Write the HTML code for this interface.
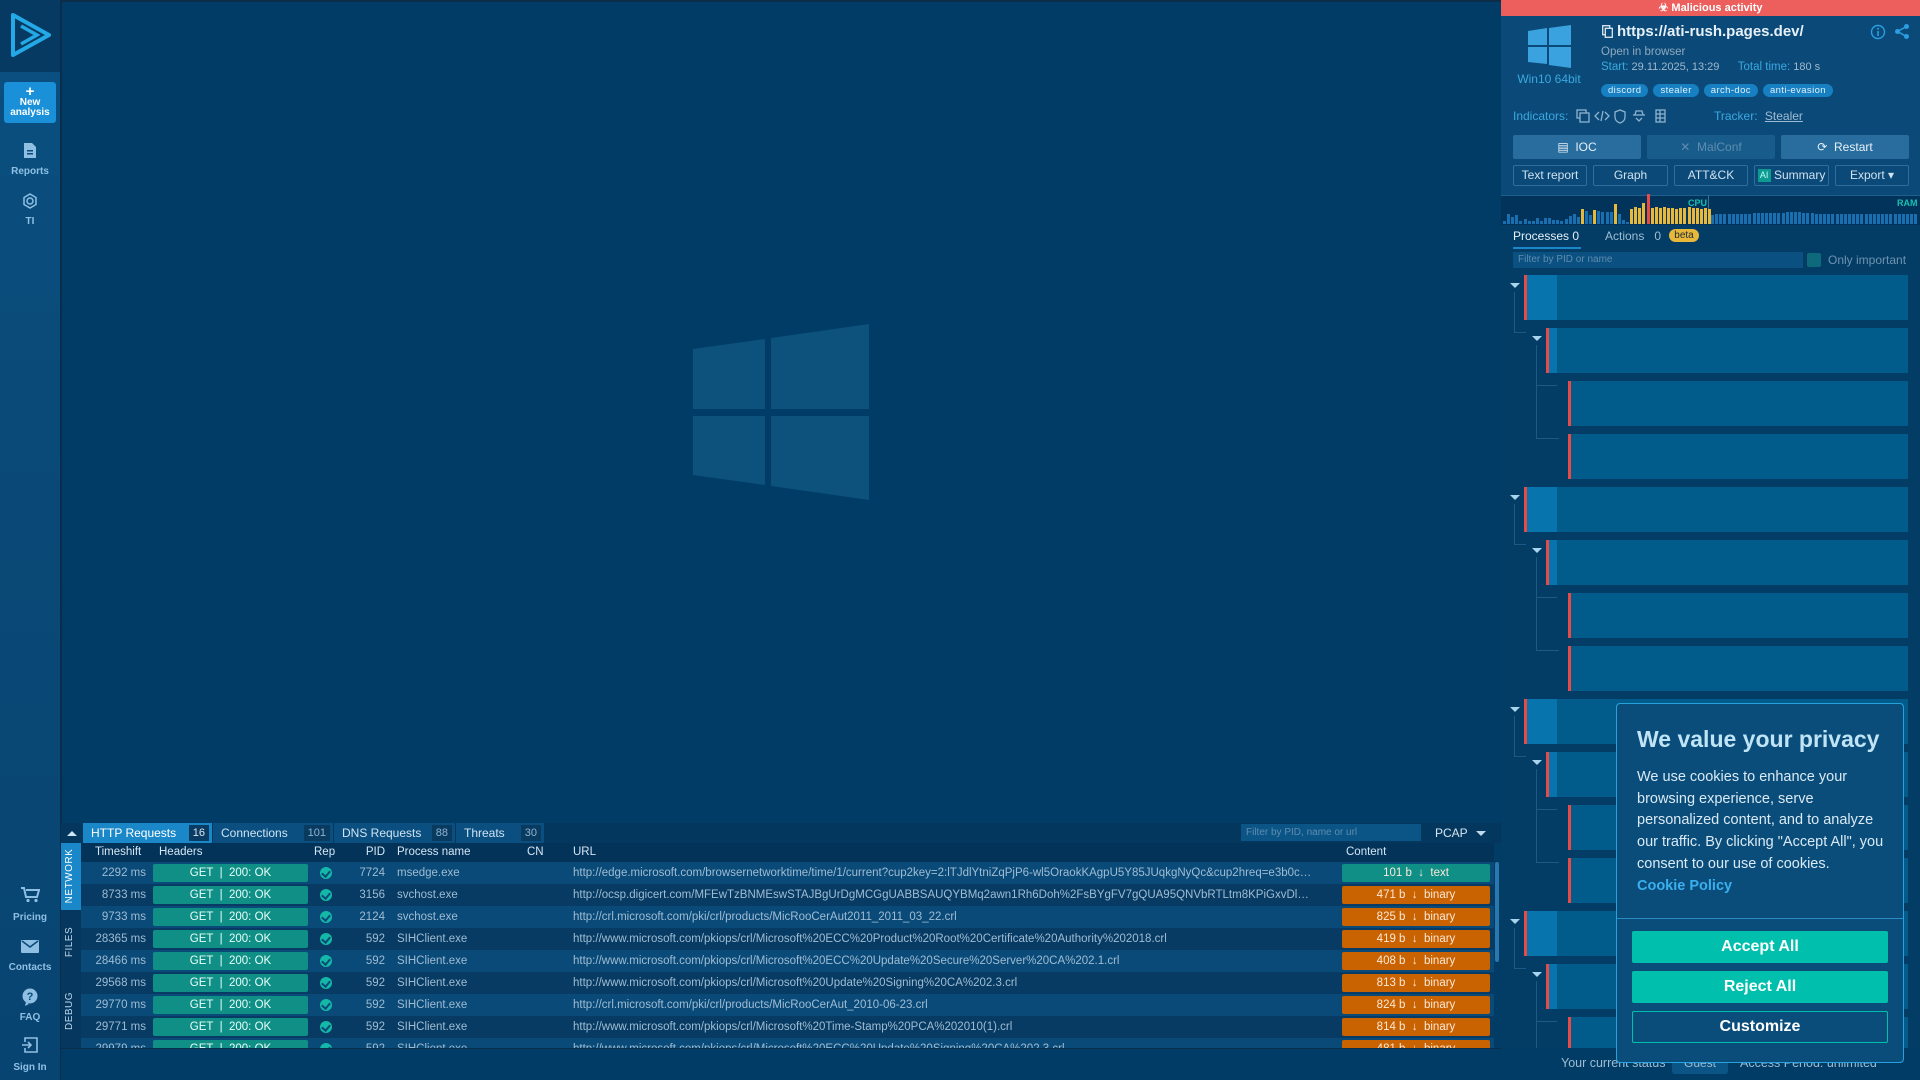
<!DOCTYPE html>
<html><head><meta charset="utf-8">
<style>
*{margin:0;padding:0;box-sizing:border-box}
body{width:1920px;height:1080px;overflow:hidden;background:#003c66;font-family:"Liberation Sans",sans-serif;position:relative;color:#cfe3f2}
.a{position:absolute}
.side{left:0;top:0;width:61px;height:1080px;background:linear-gradient(#073a62 0,#073a62 72px,#0a4f80 72px,#0a4a78 400px,#084472 1080px);border-right:1px solid #0b2d4a}
.sl{position:absolute;left:0;width:60px;text-align:center;font-size:10px;font-weight:bold;color:#8fc0e4}
.main{left:61px;top:0;width:1440px;height:1049px;background:#003c66;border-top:2px solid #0b2d4a;border-left:1px solid #0b2d4a}
.right{left:1501px;top:0;width:419px;height:1049px;background:#0b4a78}
.tab{position:absolute;top:823px;height:20px;font-size:12px;color:#cfe3f2;padding-left:8px;line-height:20px;background:#0a4f80;font-family:"Liberation Sans Narrow","Liberation Sans",sans-serif}
.tab b{position:absolute;right:3px;top:2px;height:16px;padding:0 4px;background:#093a60;font-weight:normal;line-height:16px;font-size:11px;color:#8fb3cf}
.row{position:absolute;left:81px;width:1413px;height:22px;font-size:11.5px;line-height:22px;color:#9fbcd3;font-family:"Liberation Sans Narrow","Liberation Sans",sans-serif;white-space:nowrap;overflow:hidden}
.row span{position:absolute}
.row .u{left:492px;width:740px;overflow:hidden;text-overflow:ellipsis}
.hd{background:#0f8f85;color:#e8fffb;text-align:center;height:18px;top:2px;line-height:18px;border-radius:2px}
.ct{height:18px;top:2px;line-height:18px;border-radius:2px;text-align:center;color:#fde9d8}
.ok{left:239px;top:5px;width:12px;height:12px;border-radius:6px;background:#14b8a6}
.ok:after{content:"";position:absolute;left:3px;top:2px;width:4px;height:6px;border:solid #0a4a78;border-width:0 2px 2px 0;transform:rotate(40deg)}
.pr{position:absolute;height:45px;background:#025c8b}
.pr i{position:absolute;left:0;top:0;width:3px;height:45px;background:#e84b45}
.pr u{position:absolute;left:3px;top:0;height:45px;background:#0874ad}
.tri{position:absolute;width:0;height:0;border-left:5px solid transparent;border-right:5px solid transparent;border-top:5px solid #a9d4ee}
.btn{position:absolute;height:24px;font-size:12px;text-align:center;line-height:24px;border-radius:2px}
.ob{position:absolute;top:165px;height:21px;border:1px solid #2f6e9b;font-size:12px;text-align:center;line-height:19px;border-radius:2px;color:#d0e2ef}
.tag{display:inline-block;height:13px;padding:0 7px;background:#1780c2;border-radius:7px;font-size:9.5px;line-height:13px;color:#e0f0fb;margin-right:5px;letter-spacing:.4px}
.ck{position:absolute;left:1632px;width:256px;height:32px;border-radius:2px;font-size:16px;font-weight:bold;text-align:center;line-height:32px;color:#fff}
</style></head><body>
<div class="a side">
 <svg class="a" style="left:9px;top:12px" width="44" height="46" viewBox="0 0 44 46"><path d="M4 3 L40 23 L4 43 Z" fill="none" stroke="#22a9e6" stroke-width="4" stroke-linejoin="round"/><path d="M12 14 L28 23 L12 32" fill="none" stroke="#22a9e6" stroke-width="3.5"/></svg>
 <div class="a" style="left:4px;top:82px;width:52px;height:41px;background:#1a90d8;border-radius:3px;text-align:center;color:#fff;font-size:10px;font-weight:bold;line-height:10px;padding-top:4px"><div style="font-size:15px;line-height:12px">+</div>New<br>analysis</div>
 <svg class="a" style="left:23px;top:142px" width="14" height="17"><path d="M1 1h8l4 4v11H1z" fill="#8fc0e4"/><rect x="4" y="8" width="6" height="1.5" fill="#0a4a78"/><rect x="4" y="11" width="6" height="1.5" fill="#0a4a78"/></svg>
 <div class="sl" style="top:166px">Reports</div>
 <svg class="a" style="left:21px;top:192px" width="18" height="18"><polygon points="9,2 15,5.5 15,12.5 9,16 3,12.5 3,5.5" fill="none" stroke="#8fc0e4" stroke-width="1.5"/><circle cx="9" cy="9" r="3" fill="none" stroke="#8fc0e4" stroke-width="1.5"/></svg>
 <div class="sl" style="top:216px">TI</div>
 <svg class="a" style="left:20px;top:886px" width="20" height="17"><path d="M1 2h3l2 9h11l2-7H6" fill="none" stroke="#8fc0e4" stroke-width="2"/><circle cx="8" cy="14.5" r="1.6" fill="#8fc0e4"/><circle cx="16" cy="14.5" r="1.6" fill="#8fc0e4"/></svg>
 <div class="sl" style="top:912px">Pricing</div>
 <svg class="a" style="left:21px;top:940px" width="18" height="13"><rect width="18" height="13" rx="1" fill="#8fc0e4"/><path d="M1 1l8 6 8-6" fill="none" stroke="#0a4a78" stroke-width="1.5"/></svg>
 <div class="sl" style="top:962px">Contacts</div>
 <svg class="a" style="left:22px;top:988px" width="16" height="18"><circle cx="8" cy="8" r="7.5" fill="#8fc0e4"/><path d="M4 14l-1 4 4-2z" fill="#8fc0e4"/><text x="8" y="12" font-size="11" font-weight="bold" text-anchor="middle" fill="#0a4a78" font-family="Liberation Sans">?</text></svg>
 <div class="sl" style="top:1012px">FAQ</div>
 <svg class="a" style="left:22px;top:1037px" width="16" height="16"><path d="M3 5V1h12v14H3v-4" fill="none" stroke="#8fc0e4" stroke-width="1.6"/><path d="M0 8h9M6 5l3 3-3 3" fill="none" stroke="#8fc0e4" stroke-width="1.6"/></svg>
 <div class="sl" style="top:1062px">Sign In</div>
</div>

<div class="a main"></div>
<svg class="a" style="left:690px;top:320px" width="185" height="185" viewBox="690 320 185 185"><polygon points="693,349 765,339 765,409 693,409" fill="#0d517d"/><polygon points="771,338 869,324 869,409 771,409" fill="#0d517d"/><polygon points="693,416 765,416 765,485 693,475" fill="#0d517d"/><polygon points="771,416 869,416 869,500 771,486" fill="#0d517d"/></svg>

<div class="a" style="left:61px;top:823px;width:1440px;height:20px;background:#04375e"></div>
<div class="a" style="left:67px;top:831px;width:0;height:0;border-left:5px solid transparent;border-right:5px solid transparent;border-bottom:5px solid #d0e6f5"></div>
<div class="tab" style="left:83px;width:129px;background:#1a88c8;color:#fff">HTTP Requests<b style="background:#0b3a62;color:#dbeaf5">16</b></div>
<div class="tab" style="left:213px;width:120px">Connections<b>101</b></div>
<div class="tab" style="left:334px;width:121px">DNS Requests<b>88</b></div>
<div class="tab" style="left:456px;width:88px">Threats<b>30</b></div>
<div class="a" style="left:1241px;top:824px;width:180px;height:17px;background:#0a5585;font-size:10px;color:#5f8cb0;line-height:17px;padding-left:5px;font-family:'Liberation Sans Narrow','Liberation Sans',sans-serif">Filter by PID, name or url</div>
<div class="a" style="left:1435px;top:824px;font-size:12px;color:#d4e6f3;line-height:18px">PCAP</div>
<div class="a" style="left:1476px;top:831px;width:0;height:0;border-left:5px solid transparent;border-right:5px solid transparent;border-top:5px solid #c0d8ea"></div>
<div class="a" style="left:61px;top:843px;width:20px;height:206px;background:#06385f"></div>
<div class="a" style="left:61px;top:843px;width:20px;height:67px;background:#1a88c8"></div>
<div class="a" style="left:64px;top:906px;transform:rotate(-90deg);transform-origin:0 0;font-size:10px;color:#fff;letter-spacing:.5px;width:60px;text-align:center">NETWORK</div>
<div class="a" style="left:64px;top:972px;transform:rotate(-90deg);transform-origin:0 0;font-size:10px;color:#bcd6ea;letter-spacing:.5px;width:60px;text-align:center">FILES</div>
<div class="a" style="left:64px;top:1046px;transform:rotate(-90deg);transform-origin:0 0;font-size:10px;color:#bcd6ea;letter-spacing:.5px;width:70px;text-align:center">DEBUG</div>
<div class="row" style="top:843px;height:19px;line-height:19px;background:#04335a;color:#d4e6f3">
<span style="left:14px">Timeshift</span><span style="left:78px">Headers</span><span style="left:233px">Rep</span><span style="left:284px;width:20px;text-align:right">PID</span><span style="left:316px">Process name</span><span style="left:446px">CN</span><span style="left:492px">URL</span><span style="left:1265px">Content</span></div>
<div class="a" style="left:81px;top:862px;width:1413px;height:187px;overflow:hidden">
<div style="position:relative;left:-81px;top:-862px">
<div class="row" style="top:862px;background:#0a4a78"><span style="left:0;width:65px;text-align:right">2292 ms</span><span class="hd" style="left:72px;width:155px">GET &nbsp;|&nbsp; 200: OK</span><span class="ok"></span><span style="left:270px;width:34px;text-align:right">7724</span><span style="left:316px">msedge.exe</span><span class="u">http://edge.microsoft.com/browsernetworktime/time/1/current?cup2key=2:lTJdlYtniZqPjP6-wl5OraokKAgpU5Y85JUqkgNyQc&amp;cup2hreq=e3b0c44298fc1c149afbf4c8996fb924</span><span class="ct" style="left:1261px;width:148px;background:#0f8f85">101 b &nbsp;↓&nbsp; text</span></div>
<div class="row" style="top:884px;background:#073b63"><span style="left:0;width:65px;text-align:right">8733 ms</span><span class="hd" style="left:72px;width:155px">GET &nbsp;|&nbsp; 200: OK</span><span class="ok"></span><span style="left:270px;width:34px;text-align:right">3156</span><span style="left:316px">svchost.exe</span><span class="u">http://ocsp.digicert.com/MFEwTzBNMEswSTAJBgUrDgMCGgUABBSAUQYBMq2awn1Rh6Doh%2FsBYgFV7gQUA95QNVbRTLtm8KPiGxvDl7I90VUCEAJ0LqoXyo4hxxe7H%2Fz9DKA%3D</span><span class="ct" style="left:1261px;width:148px;background:#c96200">471 b &nbsp;↓&nbsp; binary</span></div>
<div class="row" style="top:906px;background:#0a4a78"><span style="left:0;width:65px;text-align:right">9733 ms</span><span class="hd" style="left:72px;width:155px">GET &nbsp;|&nbsp; 200: OK</span><span class="ok"></span><span style="left:270px;width:34px;text-align:right">2124</span><span style="left:316px">svchost.exe</span><span class="u">http://crl.microsoft.com/pki/crl/products/MicRooCerAut2011_2011_03_22.crl</span><span class="ct" style="left:1261px;width:148px;background:#c96200">825 b &nbsp;↓&nbsp; binary</span></div>
<div class="row" style="top:928px;background:#073b63"><span style="left:0;width:65px;text-align:right">28365 ms</span><span class="hd" style="left:72px;width:155px">GET &nbsp;|&nbsp; 200: OK</span><span class="ok"></span><span style="left:270px;width:34px;text-align:right">592</span><span style="left:316px">SIHClient.exe</span><span class="u">http://www.microsoft.com/pkiops/crl/Microsoft%20ECC%20Product%20Root%20Certificate%20Authority%202018.crl</span><span class="ct" style="left:1261px;width:148px;background:#c96200">419 b &nbsp;↓&nbsp; binary</span></div>
<div class="row" style="top:950px;background:#0a4a78"><span style="left:0;width:65px;text-align:right">28466 ms</span><span class="hd" style="left:72px;width:155px">GET &nbsp;|&nbsp; 200: OK</span><span class="ok"></span><span style="left:270px;width:34px;text-align:right">592</span><span style="left:316px">SIHClient.exe</span><span class="u">http://www.microsoft.com/pkiops/crl/Microsoft%20ECC%20Update%20Secure%20Server%20CA%202.1.crl</span><span class="ct" style="left:1261px;width:148px;background:#c96200">408 b &nbsp;↓&nbsp; binary</span></div>
<div class="row" style="top:972px;background:#073b63"><span style="left:0;width:65px;text-align:right">29568 ms</span><span class="hd" style="left:72px;width:155px">GET &nbsp;|&nbsp; 200: OK</span><span class="ok"></span><span style="left:270px;width:34px;text-align:right">592</span><span style="left:316px">SIHClient.exe</span><span class="u">http://www.microsoft.com/pkiops/crl/Microsoft%20Update%20Signing%20CA%202.3.crl</span><span class="ct" style="left:1261px;width:148px;background:#c96200">813 b &nbsp;↓&nbsp; binary</span></div>
<div class="row" style="top:994px;background:#0a4a78"><span style="left:0;width:65px;text-align:right">29770 ms</span><span class="hd" style="left:72px;width:155px">GET &nbsp;|&nbsp; 200: OK</span><span class="ok"></span><span style="left:270px;width:34px;text-align:right">592</span><span style="left:316px">SIHClient.exe</span><span class="u">http://crl.microsoft.com/pki/crl/products/MicRooCerAut_2010-06-23.crl</span><span class="ct" style="left:1261px;width:148px;background:#c96200">824 b &nbsp;↓&nbsp; binary</span></div>
<div class="row" style="top:1016px;background:#073b63"><span style="left:0;width:65px;text-align:right">29771 ms</span><span class="hd" style="left:72px;width:155px">GET &nbsp;|&nbsp; 200: OK</span><span class="ok"></span><span style="left:270px;width:34px;text-align:right">592</span><span style="left:316px">SIHClient.exe</span><span class="u">http://www.microsoft.com/pkiops/crl/Microsoft%20Time-Stamp%20PCA%202010(1).crl</span><span class="ct" style="left:1261px;width:148px;background:#c96200">814 b &nbsp;↓&nbsp; binary</span></div>
<div class="row" style="top:1038px;background:#0a4a78"><span style="left:0;width:65px;text-align:right">29979 ms</span><span class="hd" style="left:72px;width:155px">GET &nbsp;|&nbsp; 200: OK</span><span class="ok"></span><span style="left:270px;width:34px;text-align:right">592</span><span style="left:316px">SIHClient.exe</span><span class="u">http://www.microsoft.com/pkiops/crl/Microsoft%20ECC%20Update%20Signing%20CA%202.3.crl</span><span class="ct" style="left:1261px;width:148px;background:#c96200">481 b &nbsp;↓&nbsp; binary</span></div>
</div></div>
<div class="a" style="left:1495px;top:862px;width:4px;height:100px;background:#2a78ad;border-radius:2px"></div>
<div class="a" style="left:61px;top:1048px;width:1859px;height:32px;background:#003c66;border-top:1px solid #0b2d4a"></div>
<div class="a" style="left:1561px;top:1056px;font-size:12.5px;color:#9fbcd3">Your current status</div>
<div class="a" style="left:1672px;top:1053px;width:56px;height:21px;background:#0a5585;border-radius:3px;font-size:12px;color:#9fbcd3;text-align:center;line-height:21px">Guest</div>
<div class="a" style="left:1740px;top:1056px;font-size:12.5px;color:#9fbcd3">Access Period: unlimited</div>

<div class="a right"></div>
<div class="a" style="left:1501px;top:0;width:419px;height:16px;background:#ec5f5c;color:#fff;font-size:11px;font-weight:bold;text-align:center;line-height:16px">☣ Malicious activity</div>
<svg class="a" style="left:1528px;top:25px" width="43" height="43" viewBox="0 0 43 43"><polygon points="0,6 19,3 19,20 0,20" fill="#3aa3df"/><polygon points="21,3 43,0 43,20 21,20" fill="#3aa3df"/><polygon points="0,22 19,22 19,39 0,37" fill="#3aa3df"/><polygon points="21,22 43,22 43,43 21,40" fill="#3aa3df"/></svg>
<div class="a" style="left:1514px;top:72px;width:70px;text-align:center;font-size:12px;color:#3aa8e0">Win10 64bit</div>
<svg class="a" style="left:1602px;top:25px" width="11" height="13"><rect x="0.7" y="0.7" width="7" height="9" fill="none" stroke="#dbe8f2" stroke-width="1.3"/><rect x="3.3" y="3.3" width="7" height="9" fill="#0b4a78" stroke="#dbe8f2" stroke-width="1.3"/></svg>
<div class="a" style="left:1617px;top:23px;font-size:15px;font-weight:bold;color:#e6f0f8">https://ati-rush.pages.dev/</div>
<div class="a" style="left:1601px;top:46px;font-size:11.5px;color:#8fa9c0">Open in browser</div>
<div class="a" style="left:1601px;top:61px;font-size:11px;color:#9fb8cc"><span style="color:#3aa8e0;font-size:11.5px">Start:</span> 29.11.2025, 13:29 &nbsp; &nbsp; &nbsp;<span style="color:#3aa8e0;font-size:11.5px">Total time:</span> 180 s</div>
<div class="a" style="left:1601px;top:80px;white-space:nowrap"><span class="tag">discord</span><span class="tag">stealer</span><span class="tag">arch-doc</span><span class="tag">anti-evasion</span></div>
<svg class="a" style="left:1870px;top:24px" width="16" height="16"><circle cx="8" cy="8" r="6.5" fill="none" stroke="#2a9ee0" stroke-width="1.4"/><rect x="7.2" y="7" width="1.6" height="5" fill="#2a9ee0"/><circle cx="8" cy="4.8" r="1" fill="#2a9ee0"/></svg>
<svg class="a" style="left:1894px;top:23px" width="16" height="17"><circle cx="12.5" cy="3.5" r="2.5" fill="#2a9ee0"/><circle cx="3.5" cy="8.5" r="2.5" fill="#2a9ee0"/><circle cx="12.5" cy="13.5" r="2.5" fill="#2a9ee0"/><path d="M12.5 3.5L3.5 8.5 12.5 13.5" fill="none" stroke="#2a9ee0" stroke-width="1.5"/></svg>
<div class="a" style="left:1513px;top:109px;font-size:12px;color:#3aa8e0">Indicators:</div>
<svg class="a" style="left:1576px;top:108px" width="96" height="16"><g fill="none" stroke="#8fb3cf" stroke-width="1.3"><rect x="1" y="2" width="9" height="8"/><rect x="4" y="5" width="9" height="9" fill="#0b4a78"/><path d="M23 4l-4 4 4 4M29 4l4 4-4 4M27 3l-2 10"/><path d="M44 2l5 2v5c0 3-2 5-5 6-3-1-5-3-5-6V4z"/><path d="M57 7h12M59 7l1-4h6l1 4M60 10l3 3 3-3"/><rect x="80" y="2" width="9" height="12"/><path d="M80 6h9M80 10h9M84 2v12"/></g></svg>
<div class="a" style="left:1714px;top:109px;font-size:12px;color:#3aa8e0">Tracker: <span style="color:#9fbcd3;text-decoration:underline;margin-left:4px">Stealer</span></div>
<div class="btn" style="left:1513px;top:135px;width:128px;background:#286d9e;color:#e6f0f8">▤ &nbsp;IOC</div>
<div class="btn" style="left:1647px;top:135px;width:128px;background:#175c8b;color:#5f8cb0">✕ &nbsp;MalConf</div>
<div class="btn" style="left:1781px;top:135px;width:128px;background:#286d9e;color:#e6f0f8">⟳ &nbsp;Restart</div>
<div class="ob" style="left:1513px;width:74px">Text report</div>
<div class="ob" style="left:1593px;width:75px">Graph</div>
<div class="ob" style="left:1674px;width:74px">ATT&amp;CK</div>
<div class="ob" style="left:1754px;width:75px"><span style="display:inline-block;background:#0f9a8f;color:#bff;font-size:9px;width:13px;height:13px;line-height:13px;vertical-align:1px">AI</span> Summary</div>
<div class="ob" style="left:1835px;width:74px">Export ▾</div>
<div class="a" style="left:1501px;top:195px;width:419px;height:30px;background:#02335a;border-top:1px solid #1e5f8e"></div>
<div class="a" style="left:1708px;top:195px;width:1px;height:29px;background:#3f6f95"></div>
<div class="a" style="left:1688px;top:198px;font-size:9px;color:#18c0b0;font-weight:bold">CPU</div>
<div class="a" style="left:1897px;top:198px;font-size:9px;color:#18c0b0;font-weight:bold">RAM</div>
<div id="bars"></div>
<div class="a" style="left:1501px;top:225px;width:419px;height:24px;background:#033d66"></div>
<div class="a" style="left:1513px;top:229px;font-size:12px;color:#e6f0f8">Processes 0</div>
<div class="a" style="left:1513px;top:247px;width:68px;height:2px;background:#1a88c8"></div>
<div class="a" style="left:1605px;top:229px;font-size:12px;color:#9fbcd3">Actions &nbsp;&nbsp;0</div>
<div class="a" style="left:1669px;top:229px;width:30px;height:13px;background:#e8b83a;border-radius:7px;font-size:10px;color:#1a2a3a;text-align:center;line-height:13px">beta</div>
<div class="a" style="left:1501px;top:249px;width:419px;height:800px;background:#033d66"></div>
<div class="a" style="left:1513px;top:252px;width:290px;height:16px;background:#0a5080;font-size:10px;color:#5f8cb0;line-height:16px;padding-left:5px">Filter by PID or name</div>
<div class="a" style="left:1807px;top:253px;width:14px;height:14px;background:#0e6a7a;border-radius:2px"></div>
<div class="a" style="left:1828px;top:253px;font-size:12px;color:#6f93b0">Only important</div>
<div id="tree"></div>

<div class="a" style="left:1616px;top:703px;width:288px;height:360px;background:#0a4d7a;border:1px solid #28a2de;border-radius:4px"></div>
<div class="a" style="left:1637px;top:726px;font-size:23px;font-weight:bold;color:#bfe4f6">We value your privacy</div>
<div class="a" style="left:1637px;top:767px;width:260px;font-size:14.5px;line-height:21.7px;color:#d9eaf5">We use cookies to enhance your browsing experience, serve personalized content, and to analyze our traffic. By clicking "Accept All", you consent to our use of cookies.<br><b style="color:#3ab0ee">Cookie Policy</b></div>
<div class="a" style="left:1617px;top:918px;width:286px;height:1px;background:#2a8cc4"></div>
<div class="ck" style="top:931px;background:#00bfad">Accept All</div>
<div class="ck" style="top:971px;background:#00bfad">Reject All</div>
<div class="ck" style="top:1011px;border:1px solid #00bfad;line-height:30px">Customize</div>

<script>
var cpu=[3,10,7,9,3,5,3,3,6,3,6,6,4,4,3,5,8,10,7,15,13,9,14,13,12,12,12,20,10,4,2,15,17,16,21,26,16,17,16,17,16,16,15,16,16,17,16,16,15,16,15];
var h='';
for(var i=0;i<cpu.length;i++){var c='#1a6fb0';if(i==19||i==22||i==27||i>=31)c='#e8b83a';if(i==35)c='#e84b45';var hh=i==35?30:cpu[i];
h+='<div class="a" style="left:'+(1503+i*4.1)+'px;top:'+(224-hh)+'px;width:3px;height:'+hh+'px;background:'+c+'"></div>';}
for(var j=0;j<50;j++){var rh=[9,10,10,10,10,10,10,10,10,10,11,11,11,11,11,11,11,11,12,12,12,12,11,11,11,10,10,10,10,10,10,10,10,10,10,10,10,10,10,10,10,10,10,10,10,10,10,10,10,10][j];
h+='<div class="a" style="left:'+(1711+j*4.15)+'px;top:'+(224-rh)+'px;width:3px;height:'+rh+'px;background:#1a6fb0"></div>';}
document.getElementById('bars').innerHTML=h;
var t='';
for(var g=0;g<4;g++){var y=275+g*212;
t+='<div class="tri" style="left:1510px;top:'+(y+8)+'px"></div><div class="a" style="left:1514px;top:'+(y+17)+'px;width:1px;height:40px;background:#1c5a85"></div><div class="a" style="left:1514px;top:'+(y+57)+'px;width:12px;height:1px;background:#1c5a85"></div>';
t+='<div class="pr" style="left:1524px;top:'+y+'px;width:384px"><u style="width:30px"></u><i></i></div>';
t+='<div class="tri" style="left:1532px;top:'+(y+61)+'px"></div><div class="a" style="left:1536px;top:'+(y+70)+'px;width:1px;height:93px;background:#1c5a85"></div><div class="a" style="left:1536px;top:'+(y+110)+'px;width:21px;height:1px;background:#1c5a85"></div><div class="a" style="left:1536px;top:'+(y+163)+'px;width:23px;height:1px;background:#1c5a85"></div>';
t+='<div class="pr" style="left:1546px;top:'+(y+53)+'px;width:362px"><u style="width:8px"></u><i></i></div>';
t+='<div class="pr" style="left:1568px;top:'+(y+106)+'px;width:340px"><i></i></div>';
t+='<div class="pr" style="left:1568px;top:'+(y+159)+'px;width:340px"><i></i></div>';}
document.getElementById('tree').innerHTML='<div class="a" style="left:0;top:0;width:1920px;height:1048px;overflow:hidden;clip-path:inset(270px 0 0 0)">'+t+'</div>';
</script>
</body></html>
